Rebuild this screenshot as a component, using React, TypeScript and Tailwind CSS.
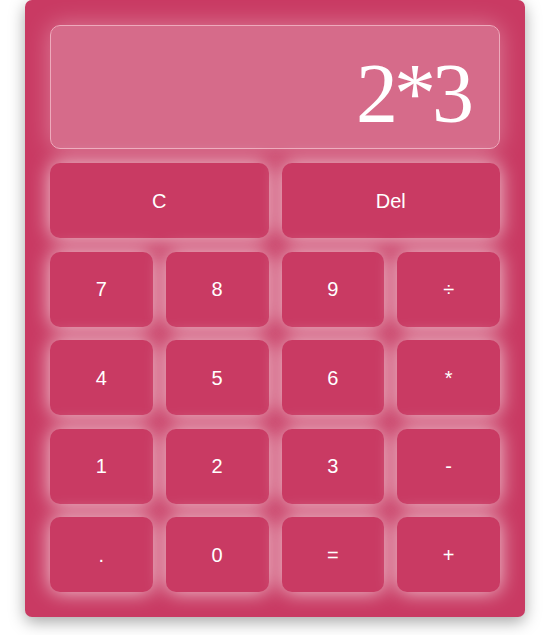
const keys = [
  ["7", "8", "9", "÷"],
  ["4", "5", "6", "*"],
  ["1", "2", "3", "-"],
  [".", "0", "=", "+"],
];

function Key({ label, wide }: { label: string; wide?: boolean }) {
  return (
    <button
      className={`h-[75px] rounded-[10px] bg-[#c93a63] text-[20px] text-white shadow-[0_0_20px_rgba(255,255,255,0.75)] ${
        wide ? "col-span-2" : ""
      }`}
      style={{ fontFamily: '"Liberation Sans", Arial, sans-serif' }}
    >
      {label}
    </button>
  );
}

export default function App() {
  return (
    <div className="min-h-[635px] bg-white pl-[25px]">
      <div className="flex h-[617px] w-[500px] flex-col rounded-[7px] bg-[#c93a63] p-[25px] shadow-[0_5px_16px_rgba(0,0,0,0.35)]">
        {/* display */}
        <div className="flex h-[124px] items-center justify-end rounded-[10px] border border-[#eeaabc] bg-white/25 pr-[29px] pt-[14px] shadow-[0_0_24px_rgba(255,255,255,0.35)]">
          <span
            className="text-[84px] leading-none tracking-[-4px] text-white"
            style={{ fontFamily: '"Liberation Serif", "Times New Roman", serif' }}
          >
            2*3
          </span>
        </div>

        {/* keypad */}
        <div className="mt-[14px] grid grid-cols-4 gap-x-[13px] gap-y-[13.5px]">
          <Key label="C" wide />
          <Key label="Del" wide />
          {keys.flat().map((k) => (
            <Key key={k} label={k} />
          ))}
        </div>
      </div>
    </div>
  );
}
